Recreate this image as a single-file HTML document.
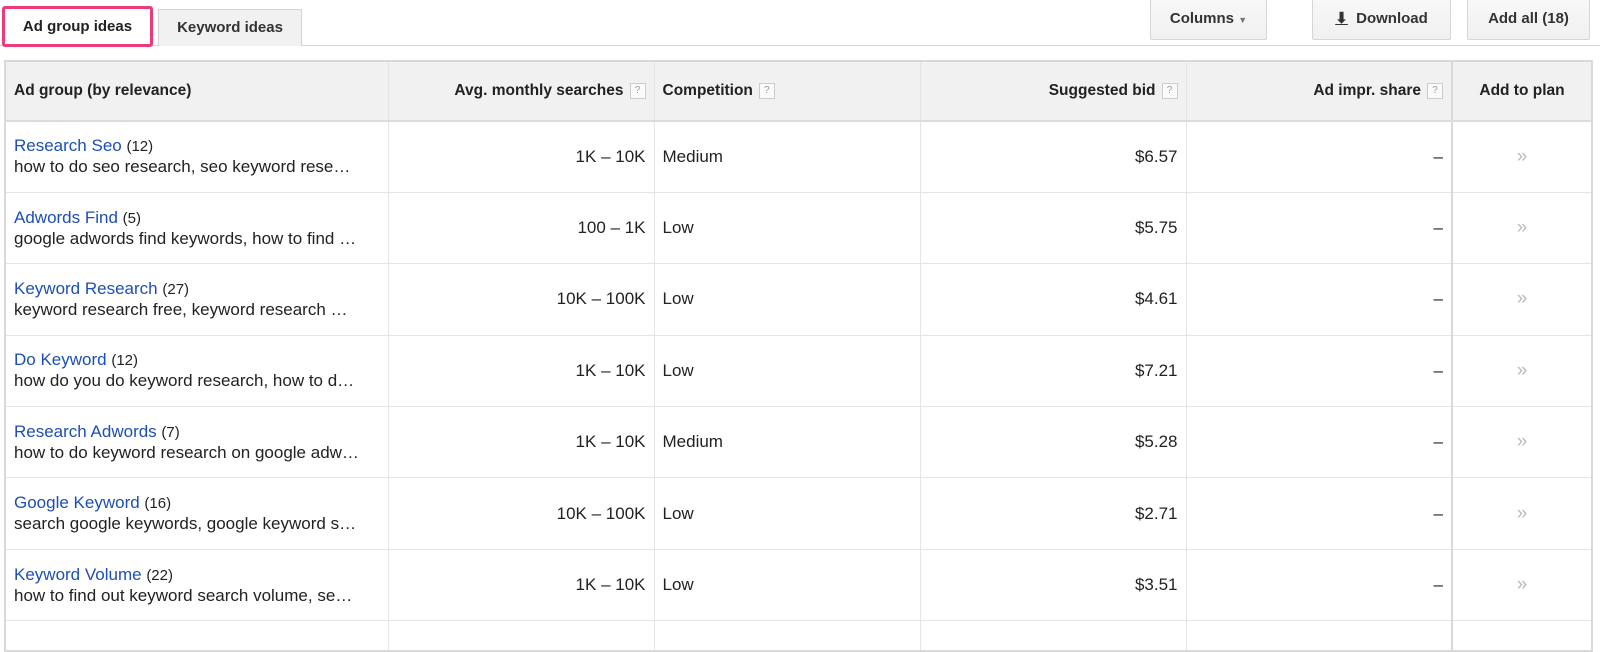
<!DOCTYPE html>
<html><head><meta charset="utf-8"><style>
body{margin:0;width:1600px;height:637px;background:#fff;font-family:"Liberation Sans",Arial,sans-serif;overflow:hidden;position:relative;color:#222}
.topline{position:absolute;left:0;right:0;top:45px;border-top:1px solid #d4d4d4}
.tab{position:absolute;font-weight:bold;font-size:15px;text-align:center;box-sizing:border-box}
.t1{left:2px;top:6px;width:151px;height:41px;border:3px solid #ee3a7a;border-radius:3px;background:#fff;line-height:35px;color:#222}
.t2{left:158px;top:9px;width:144px;height:37px;border:1px solid #d4d4d4;border-bottom:none;background:#f1f1f1;line-height:36px;color:#333}
.btn{position:absolute;top:-2px;height:42px;box-sizing:border-box;border:1px solid #d6d6d6;border-radius:2px;background:linear-gradient(#f8f8f8,#f0f0f0);font-weight:bold;font-size:15px;line-height:40px;text-align:center;color:#333}
table{position:absolute;left:4px;top:60px;border-collapse:collapse;table-layout:fixed;width:1589px;border:2px solid #d9d9d9}
td,th{border:1px solid #e5e5e5;font-size:17px;padding:0 8px;white-space:nowrap;overflow:hidden;line-height:20px}
th{background:#f1f1f1;font-size:15.5px;text-align:right;border-bottom:2px solid #dcdcdc}
tr.h{height:60px}
tr.d{height:71.4px}
th.l{text-align:left}
.q{display:inline-block;width:14px;height:14px;border:1px solid #ccc;font-size:10px;line-height:14px;color:#999;text-align:center;font-weight:normal;vertical-align:middle;margin-left:6px;background:#fafafa}
a{color:#1c4fb5;text-decoration:none}
.c{font-size:15px}
.r{text-align:right}
.arr{text-align:center;color:#bbb;font-size:19px}
.div2{border-left:2px solid #d9d9d9}
</style></head><body>
<div class="topline"></div>
<div class="tab t1">Ad group ideas</div>
<div class="tab t2">Keyword ideas</div>
<div class="btn" style="left:1150px;width:117px">Columns <span style="font-size:9px;color:#777">▼</span></div>
<div class="btn" style="left:1312px;width:139px"><span style="text-decoration:underline">⬇</span>&nbsp; Download</div>
<div class="btn" style="left:1467px;width:123px">Add all (18)</div>
<table>
<colgroup><col style="width:383px"><col style="width:266px"><col style="width:266px"><col style="width:266px"><col style="width:266px"><col></colgroup>
<tr class="h"><th class="l">Ad group (by relevance)</th><th>Avg. monthly searches<span class="q">?</span></th><th class="l">Competition<span class="q">?</span></th><th>Suggested bid<span class="q">?</span></th><th>Ad impr. share<span class="q">?</span></th><th class="div2" style="text-align:center">Add to plan</th></tr>
<tr class="d"><td><a>Research Seo</a> <span class="c">(12)</span><br>how to do seo research, seo keyword rese…</td><td class="r">1K – 10K</td><td>Medium</td><td class="r">$6.57</td><td class="r">–</td><td class="arr div2">»</td></tr>
<tr class="d"><td><a>Adwords Find</a> <span class="c">(5)</span><br>google adwords find keywords, how to find …</td><td class="r">100 – 1K</td><td>Low</td><td class="r">$5.75</td><td class="r">–</td><td class="arr div2">»</td></tr>
<tr class="d"><td><a>Keyword Research</a> <span class="c">(27)</span><br>keyword research free, keyword research …</td><td class="r">10K – 100K</td><td>Low</td><td class="r">$4.61</td><td class="r">–</td><td class="arr div2">»</td></tr>
<tr class="d"><td><a>Do Keyword</a> <span class="c">(12)</span><br>how do you do keyword research, how to d…</td><td class="r">1K – 10K</td><td>Low</td><td class="r">$7.21</td><td class="r">–</td><td class="arr div2">»</td></tr>
<tr class="d"><td><a>Research Adwords</a> <span class="c">(7)</span><br>how to do keyword research on google adw…</td><td class="r">1K – 10K</td><td>Medium</td><td class="r">$5.28</td><td class="r">–</td><td class="arr div2">»</td></tr>
<tr class="d"><td><a>Google Keyword</a> <span class="c">(16)</span><br>search google keywords, google keyword s…</td><td class="r">10K – 100K</td><td>Low</td><td class="r">$2.71</td><td class="r">–</td><td class="arr div2">»</td></tr>
<tr class="d"><td><a>Keyword Volume</a> <span class="c">(22)</span><br>how to find out keyword search volume, se…</td><td class="r">1K – 10K</td><td>Low</td><td class="r">$3.51</td><td class="r">–</td><td class="arr div2">»</td></tr>
<tr style="height:30px"><td></td><td></td><td></td><td></td><td></td><td class="div2"></td></tr>
</table>
</body></html>
